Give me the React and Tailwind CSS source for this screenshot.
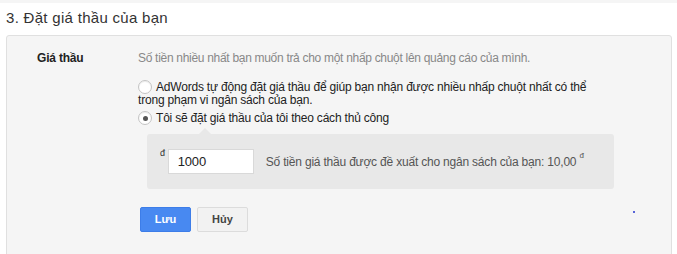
import React from "react";

const Radio = ({ checked }) => (
  <span className="inline-block align-[-3px] w-[14px] h-[14px] rounded-full border border-[#c4c4c4] bg-white shadow-[inset_0_1px_1px_rgba(0,0,0,0.08)] mr-[4px] relative">
    {checked && (
      <span className="absolute left-[3.5px] top-[3.5px] w-[5px] h-[5px] rounded-full bg-[#555]" />
    )}
  </span>
);

const App = () => {
  return (
    <div className="w-[677px] h-[254px] overflow-hidden bg-white font-['Liberation_Sans',Arial,sans-serif] relative">
      <div className="h-[3px] bg-[#f5f5f5]" />
      <h2 className="pl-[6px] pt-[5px] text-[15px] leading-[20px] tracking-[0.3px] text-[#333]">
        3. Đặt giá thầu của bạn
      </h2>
      <div className="mt-[7px] ml-[6px] w-[666px] h-[300px] border border-[#e0e0e0] rounded-t-[3px] bg-[#f5f5f5] flex pt-[14px] text-[12px] tracking-[-0.2px]">
        <div className="w-[131px] pl-[30px] leading-[16px] font-bold text-[#222]">
          Giá thầu
        </div>
        <div className="flex-1">
          <p className="leading-[16px] text-[#888] tracking-[-0.3px]">
            Số tiền nhiều nhất bạn muốn trả cho một nhấp chuột lên quảng cáo của mình.
          </p>
          <div className="mt-[14px] w-[460px] leading-[13px] text-[#222]">
            <Radio />
            AdWords tự động đặt giá thầu để giúp bạn nhận được nhiều nhấp chuột nhất có thể trong phạm vi ngân sách của bạn.
          </div>
          <div className="mt-[3px] leading-[16px] text-[#222]">
            <Radio checked />
            Tôi sẽ đặt giá thầu của tôi theo cách thủ công
          </div>
          <div className="relative mt-[8px] ml-[9px] w-[467px] h-[55px] rounded-[3px] bg-[#e8e8e8] flex items-center pl-[13px]">
            <span className="absolute left-[52px] top-[-6px] w-0 h-0 border-l-[6px] border-r-[6px] border-b-[6px] border-l-transparent border-r-transparent border-b-[#e8e8e8]" />
            <span className="text-[9px] text-[#333] self-start mt-[13px] mr-[3px]">đ</span>
            <div className="w-[86px] h-[25px] bg-white border border-[#d9d9d9] flex items-center pl-[9px] text-[13px] text-[#222]">
              1000
            </div>
            <span className="ml-[12px] text-[#555] whitespace-nowrap">
              Số tiền giá thầu được đề xuất cho ngân sách của bạn: 10,00 <sup className="text-[8px] align-[4px]">đ</sup>
            </span>
          </div>
          <div className="mt-[18px] ml-[2px] flex gap-[6px] tracking-normal">
            <button className="w-[51px] h-[25px] rounded-[2px] bg-[#4889f1] border border-[#3d7de8] text-white text-[11px] font-bold">
              Lưu
            </button>
            <button className="w-[51px] h-[25px] rounded-[2px] bg-[#f2f2f2] border border-[#dcdcdc] text-[#444] text-[11px] font-bold">
              Hủy
            </button>
          </div>
        </div>
      </div>
      <span className="absolute left-[633px] top-[211px] w-[2px] h-[2px] bg-[#2233cc] rounded-full" />
    </div>
  );
};

export default App;
